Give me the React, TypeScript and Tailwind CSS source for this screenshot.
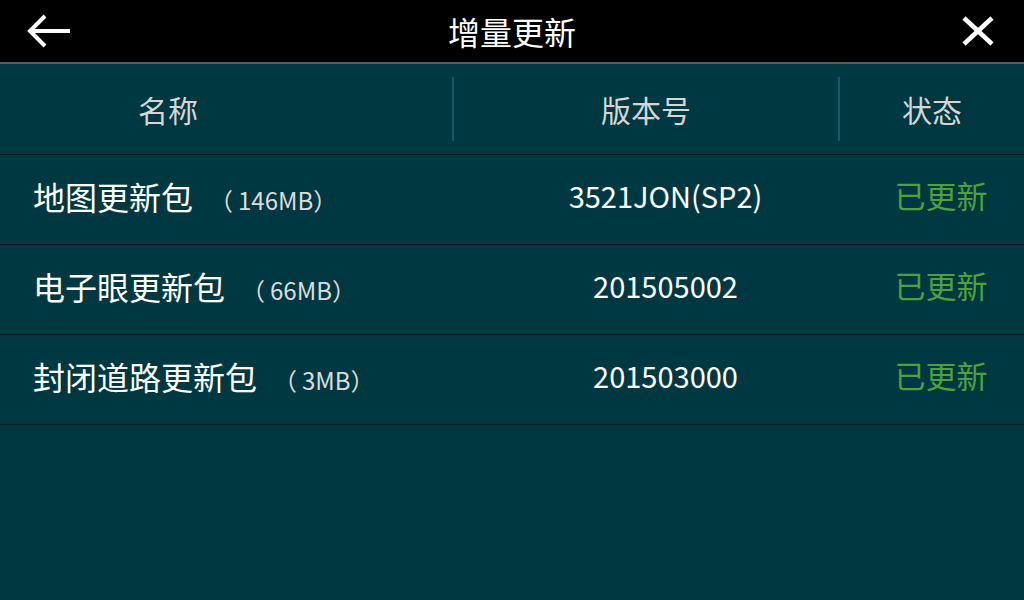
import React from 'react';

type Pack = {
  name: string;
  size: string;
  version: string;
  status: string;
};

const packs: Pack[] = [
  { name: '地图更新包', size: '146MB', version: '3521JON(SP2)', status: '已更新' },
  { name: '电子眼更新包', size: '66MB', version: '201505002', status: '已更新' },
  { name: '封闭道路更新包', size: '3MB', version: '201503000', status: '已更新' },
];

const font = { fontFamily: '"Noto Sans CJK SC", "Noto Sans", sans-serif' };

const App: React.FC = () => {
  return (
    <div className="w-[1024px] h-[600px] bg-[#003842] overflow-hidden" style={font}>
      {/* title bar */}
      <div className="h-[64px] bg-black border-b-2 border-[#5a5a5a] grid grid-cols-[1fr_auto_1fr] items-center px-[26px]">
        <svg width="46" height="34" viewBox="0 0 46 34" fill="none" stroke="white" strokeWidth="4">
          <path d="M44 17H5" />
          <path d="M19 2L4 17l15 15" />
        </svg>
        <h1 className="text-[32px] text-white leading-none">增量更新</h1>
        <svg width="34" height="30" viewBox="0 0 34 30" fill="none" stroke="white" strokeWidth="4.5" className="justify-self-end mr-[3px]">
          <path d="M3 2l28 26" />
          <path d="M31 2L3 28" />
        </svg>
      </div>

      {/* column headers */}
      <div className="h-[91px] border-b border-[#07181c] flex items-center text-[30px] text-[#d6d6d6]">
        <div className="w-[452px] pl-[138px]">名称</div>
        <div className="w-[2px] h-[64px] bg-[#1f5664]" />
        <div className="w-[384px] text-center">版本号</div>
        <div className="w-[2px] h-[64px] bg-[#1f5664]" />
        <div className="flex-1 text-center">状态</div>
      </div>

      {packs.map((p) => (
        <div key={p.name} className="h-[90px] border-b border-[#07181c] grid grid-cols-[473px_385px_1fr] items-center pb-[8px]">
          <div className="pl-[33px] flex items-baseline">
            <span className="text-[32px] text-white">{p.name}</span>
            <span className="ml-[16px] text-[24px] text-[#dcdcdc]">
              （<span className="ml-[5px]">{p.size}</span>）
            </span>
          </div>
          <div className="text-center text-[29px] text-white">{p.version}</div>
          <div className="text-center text-[31px] text-[#4ca23c]">{p.status}</div>
        </div>
      ))}
    </div>
  );
};

export default App;
